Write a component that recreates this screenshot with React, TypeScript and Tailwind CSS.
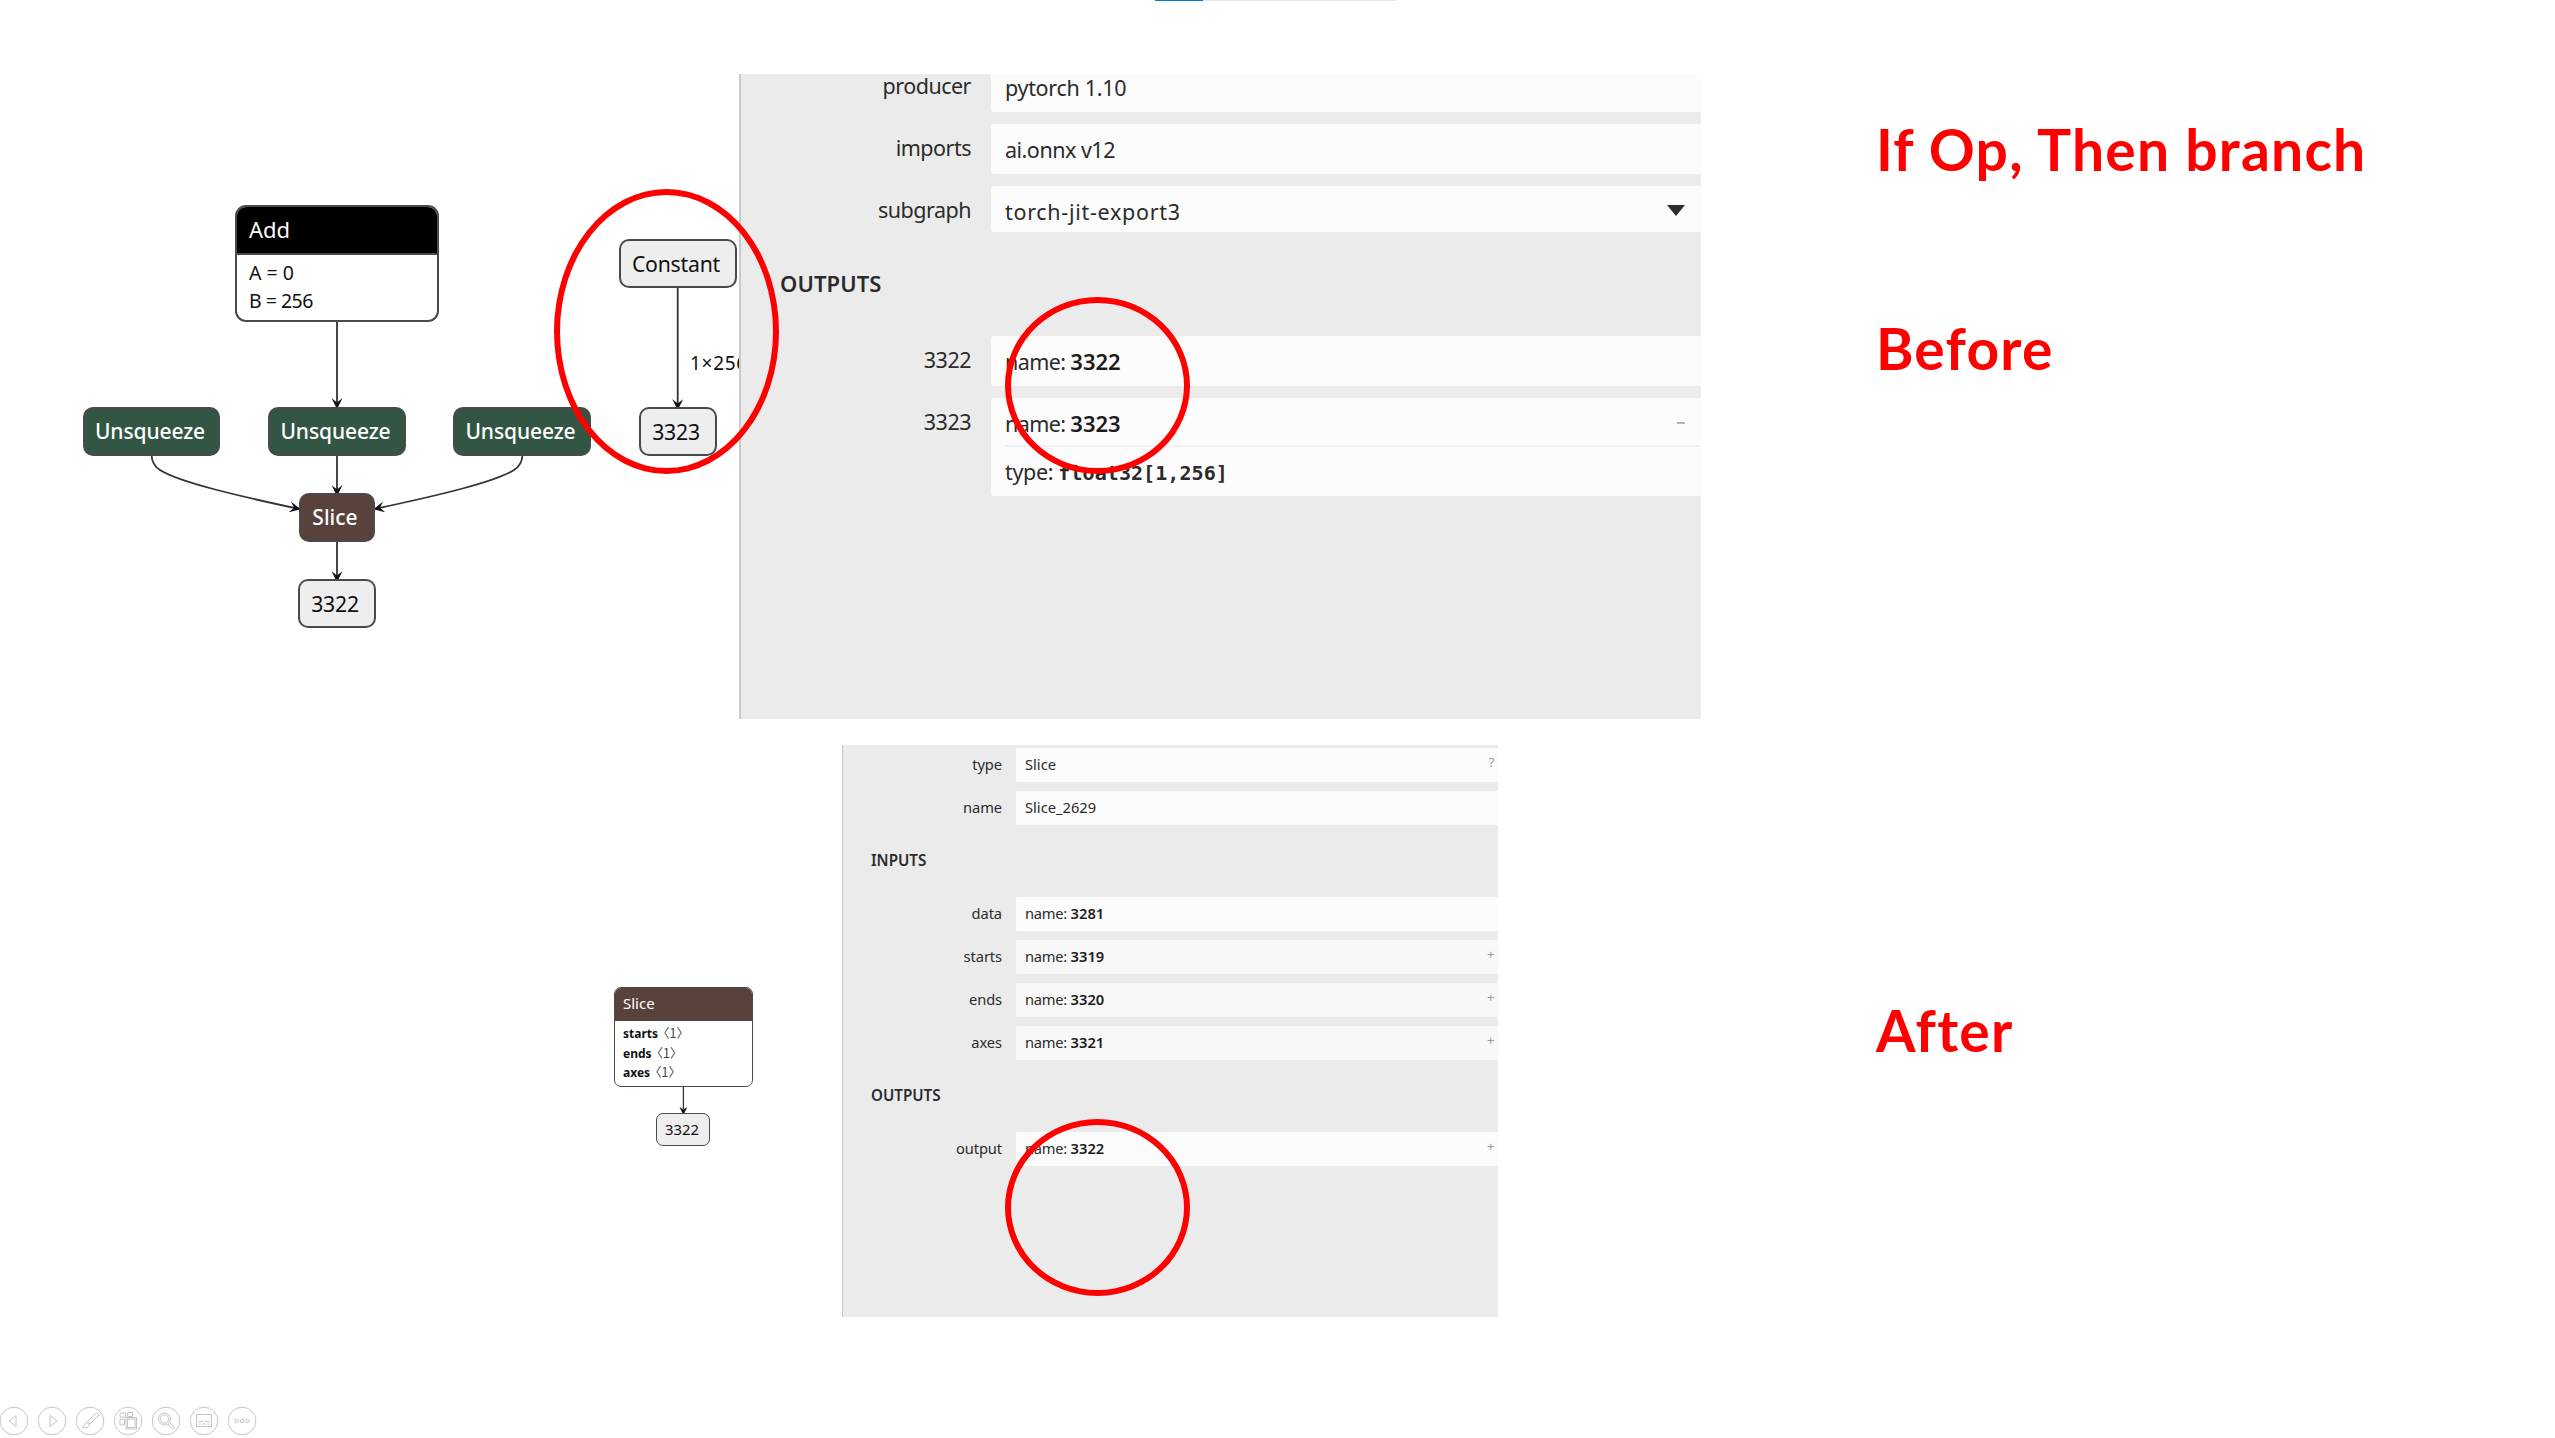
import type { ReactNode } from 'react';

function GraphNode({ className, children }: { className: string; children: ReactNode }) {
  return (
    <div className={`absolute flex items-center justify-center border-[#4a4a4a] whitespace-nowrap ${className}`}>
      {children}
    </div>
  );
}

const opNode = 'rounded-[10px] border-2 bg-[#335544] text-white text-[21px] pt-[1px] pr-[3px] font-medium tracking-[-0.1px]';
const valueNode = 'rounded-[10px] border-2 bg-[#eeeeee] text-[#111] text-[21.2px] tracking-[-0.2px] pt-[1px] pr-[4px]';

function BeforeGraph() {
  return (
    <div className="absolute left-0 top-0 h-[719px] w-[739px] overflow-hidden">
      <svg className="absolute inset-0" width="739" height="719" fill="none" stroke="#333" strokeWidth="1.8">
        <defs>
          <marker id="vee" viewBox="0 0 10 10" refX="9" refY="5" markerWidth="11" markerHeight="11" markerUnits="userSpaceOnUse" orient="auto">
            <path d="M0 0L10 5L0 10L4 5Z" fill="#111" stroke="none" />
          </marker>
        </defs>
        <path d="M337 321V408" markerEnd="url(#vee)" />
        <path d="M337 455V495" markerEnd="url(#vee)" />
        <path d="M337 541V581" markerEnd="url(#vee)" />
        <path d="M677.7 287V409" markerEnd="url(#vee)" />
        <path d="M151.5 455C152 463 155 467 160 470C179 482 234 495 299.5 509" markerEnd="url(#vee)" />
        <path d="M522.5 455C522 463 519 467 514 470C495 482 440 495 374.5 509" markerEnd="url(#vee)" />
      </svg>
      <div className="absolute left-[235px] top-[205px] flex h-[117px] w-[204px] flex-col overflow-hidden rounded-[11px] border-2 border-[#4a4a4a] bg-white">
        <div className="h-[46px] bg-black pl-[12px] text-[22px] leading-[45px] text-white">Add</div>
        <div className="flex flex-col border-t-2 border-[#4a4a4a] pl-[12px] pt-[4px] text-[19.5px] leading-[28px] text-[#111]">
          <span>A = 0</span>
          <span className="tracking-[-0.5px]">B = 256</span>
        </div>
      </div>
      <GraphNode className={`left-[83px] top-[407px] h-[49px] w-[137px] ${opNode}`}>Unsqueeze</GraphNode>
      <GraphNode className={`left-[268px] top-[407px] h-[49px] w-[138px] ${opNode}`}>Unsqueeze</GraphNode>
      <GraphNode className={`left-[453px] top-[407px] h-[49px] w-[138px] ${opNode}`}>Unsqueeze</GraphNode>
      <GraphNode className="left-[299px] top-[493px] h-[49px] w-[76px] rounded-[10px] border-2 bg-[#59423b] pr-[4px] pt-[1px] text-[21px] font-medium text-white">Slice</GraphNode>
      <GraphNode className={`left-[298px] top-[579px] h-[49px] w-[78px] ${valueNode}`}>3322</GraphNode>
      <GraphNode className={`left-[619px] top-[239px] h-[49px] w-[118px] ${valueNode}`}>Constant</GraphNode>
      <GraphNode className={`left-[639px] top-[407px] h-[49px] w-[78px] ${valueNode}`}>3323</GraphNode>
      <span className="absolute left-[690px] top-[349px] whitespace-nowrap text-[19px] leading-[28px] tracking-[0.7px] text-[#111]">1×256</span>
    </div>
  );
}

function AfterGraph() {
  return (
    <div className="absolute left-[600px] top-[970px] h-[190px] w-[180px]">
      <svg className="absolute inset-0" width="180" height="190" fill="none" stroke="#333" strokeWidth="1.3">
        <path d="M83.4 117V139" />
        <path d="M79.5 137L83.4 145L87.3 137L83.4 139.5Z" fill="#111" stroke="none" />
      </svg>
      <div className="absolute left-[14px] top-[17px] flex h-[100px] w-[139px] flex-col overflow-hidden rounded-[7px] border-[1.5px] border-[#4a4a4a] bg-white">
        <div className="h-[33px] border-b border-[#444] bg-[#59423b] pl-[8px] text-[15px] leading-[31px] text-white">Slice</div>
        <div className="flex flex-col pl-[8px] pt-[2px] text-[12px] leading-[19.5px] text-[#111]">
          {['starts', 'ends', 'axes'].map((n) => (
            <span key={n} className="h-[19.5px] whitespace-nowrap">
              <b className="font-bold">{n}</b>
              <span className="-ml-px font-['Noto_Sans_CJK_SC',sans-serif] text-[12.5px] text-[#444]">〈1〉</span>
            </span>
          ))}
        </div>
      </div>
      <GraphNode className="left-[56px] top-[143px] h-[33px] w-[54px] rounded-[7px] border-[1.5px] bg-[#eeeeee] pr-[2px] text-[14.8px] text-[#111]">3322</GraphNode>
    </div>
  );
}

function TopRow({ label, className = '', children }: { label: string; className?: string; children: ReactNode }) {
  return (
    <div className={`flex ${className}`}>
      <div className="w-[230px] shrink-0 text-right leading-[48px] tracking-[-0.5px]">{label}</div>
      <div className="ml-5 flex-1 rounded-l-[3px] bg-[#fcfcfc] pl-[14px] leading-[51px]">{children}</div>
    </div>
  );
}

function TopPanel() {
  return (
    <section className="absolute left-[739px] top-[74px] h-[645px] w-[962px] overflow-hidden border-l-2 border-[#cacaca] bg-[#ebebeb] text-[21.5px] text-[#2b2b2b]">
      <div className="-mt-[12px] flex flex-col gap-3">
        <TopRow label="producer" className="h-[50px]"><span className="tracking-[-0.3px]">pytorch 1.10</span></TopRow>
        <TopRow label="imports" className="h-[50px]"><span className="tracking-[-0.5px]">ai.onnx v12</span></TopRow>
        <TopRow label="subgraph" className="h-[46px]">
          <div className="flex items-start justify-between pr-4">
            <span className="tracking-[0.7px]">torch-jit-export3</span>
            <svg className="mt-[19px]" width="18" height="11" viewBox="0 0 18 11"><path d="M0 0H18L9 11Z" fill="#2d2d2d" /></svg>
          </div>
        </TopRow>
      </div>
      <h2 className="mt-[31px] pl-[39px] text-[22px] font-semibold leading-[40px] tracking-[0.1px]">OUTPUTS</h2>
      <div className="mt-[33px] flex flex-col gap-3">
        <TopRow label="3322" className="h-[50px]">
          <span className="tracking-[-0.6px]">name: </span><b className="text-[22px] font-semibold text-[#1c1c1c]">3322</b>
        </TopRow>
        <TopRow label="3323" className="h-[98px]">
          <div className="flex h-[49px] justify-between border-b-2 border-[#f1f1f1] pr-4">
            <span><span className="tracking-[-0.6px]">name: </span><b className="text-[22px] font-semibold text-[#1c1c1c]">3323</b></span>
            <i className="mt-[24px] h-[2px] w-[8px] bg-[#b4b4b4]" />
          </div>
          <div className="h-[49px] leading-[49px]">
            <span className="tracking-[-0.35px]">type: </span>
            <b className="font-['DejaVu_Sans_Mono',monospace] text-[20px] font-bold tracking-[0.07px] text-[#2b2b2b]">float32[1,256]</b>
          </div>
        </TopRow>
      </div>
    </section>
  );
}

function BottomRow({ label, value, name, mark, shade = 'bg-[#fcfcfc]' }: { label: string; value?: string; name?: string; mark?: string; shade?: string }) {
  return (
    <div className="flex h-[34.2px]">
      <div className="w-[159px] shrink-0 text-right leading-[32px] tracking-[-0.1px]">{label}</div>
      <div className={`ml-[14px] flex flex-1 justify-between rounded-l-[2px] pl-[9px] pr-[3.5px] leading-[33px] ${shade}`}>
        <span>
          {value}
          {name && <><span className="tracking-[-0.25px]">name: </span><b className="font-semibold text-[#1c1c1c]">{name}</b></>}
        </span>
        {mark && <span className="text-[13px] leading-[29px] text-[#999]">{mark}</span>}
      </div>
    </div>
  );
}

function BottomPanel() {
  return (
    <section className="absolute left-[842px] top-[745px] h-[572px] w-[656px] overflow-hidden border-l-[1.5px] border-[#c6c6c6] bg-[#ebebeb] pt-[3px] text-[14.7px] text-[#2b2b2b]">
      <div className="flex flex-col gap-[8.8px]">
        <BottomRow label="type" value="Slice" mark="?" />
        <BottomRow label="name" value="Slice_2629" />
      </div>
      <h2 className="mt-[19px] pl-[28px] text-[15.2px] font-semibold leading-[32px]">INPUTS</h2>
      <div className="mt-[21px] flex flex-col gap-[8.7px]">
        <BottomRow label="data" name="3281" />
        <BottomRow label="starts" name="3319" mark="+" shade="bg-[#f8f8f8]" />
        <BottomRow label="ends" name="3320" mark="+" shade="bg-[#f8f8f8]" />
        <BottomRow label="axes" name="3321" mark="+" shade="bg-[#f8f8f8]" />
      </div>
      <h2 className="mt-[19px] pl-[28px] text-[15.2px] font-semibold leading-[32px]">OUTPUTS</h2>
      <div className="mt-[21px]">
        <BottomRow label="output" name="3322" mark="+" />
      </div>
    </section>
  );
}

const controls: ReactNode[] = [
  <path key="p" d="M16 8.5V19.5L9 14Z" />,
  <path key="n" d="M12 8.5V19.5L19 14Z" />,
  <path key="d" d="M20.5 5.5L23 8L14 17L11.5 14.8ZM11 15.5C8.5 16 9 19 6.5 20.5C9.5 21.5 13 20.5 13.5 17.8Z" />,
  <g key="s"><path d="M6 6H11.5V10H6ZM13.5 5.5H18.5V9.5H13.5ZM6 12H10.5V18H6Z" /><rect x="12" y="10.5" width="10.5" height="11.5" /><rect x="13.5" y="12" width="7.5" height="8.5" /></g>,
  <g key="z"><circle cx="12.5" cy="12" r="6" /><circle cx="12.5" cy="12" r="4.2" /><path d="M16 17L20.5 22L22.5 20L17.5 15.5" /></g>,
  <g key="c"><rect x="6.5" y="7.5" width="15" height="12" /><path d="M8.5 14.5H13M14.5 14.5H19.5M8.5 17H10.5M12 17H15.5M17 17H19.5" /></g>,
  <g key="m"><circle cx="8.5" cy="14" r="1.7" /><circle cx="14" cy="14" r="1.7" /><circle cx="19.5" cy="14" r="1.7" /></g>,
];

export default function App() {
  return (
    <main className="relative h-[1438px] w-[2555px] overflow-hidden bg-white font-['Noto_Sans','Open_Sans',sans-serif]">
      <div className="ml-[1155px] flex h-px w-[241px] bg-[#e5e5e5]"><div className="w-12 bg-[#0078d7]" /></div>
      <BeforeGraph />
      <TopPanel />
      <AfterGraph />
      <BottomPanel />
      <div className="absolute left-[554px] top-[189px] h-[285px] w-[225px] rounded-[50%] border-[6px] border-[#ff0000]" />
      <div className="absolute left-[1005px] top-[297px] h-[177px] w-[185px] rounded-[50%] border-[6px] border-[#ff0000]" />
      <div className="absolute left-[1005px] top-[1119px] h-[177px] w-[185px] rounded-[50%] border-[6px] border-[#ff0000]" />
      <div className="absolute left-[1876px] top-[113px] flex flex-col whitespace-nowrap font-['Lato',sans-serif] text-[57px] font-bold leading-[72px] tracking-[1.2px] text-[#ff0000]">
        <p className="h-[72px]">If Op, Then branch</p>
        <p className="mt-[127px] h-[72px]">Before</p>
        <p className="mt-[610px] h-[72px]">After</p>
      </div>
      <footer className="absolute bottom-[2px] left-0 flex gap-[9px]">
        {controls.map((icon, i) => (
          <svg key={i} width="29" height="30" viewBox="0 -1 29 30" fill="none" stroke="#c6c6c6" strokeWidth="1">
            <circle cx="14" cy="14" r="13.8" />
            {icon}
          </svg>
        ))}
      </footer>
    </main>
  );
}
